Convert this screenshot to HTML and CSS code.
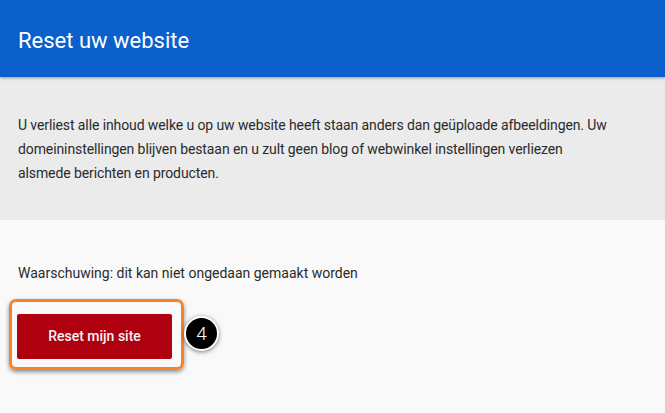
FILE: index.html
```html
<!DOCTYPE html>
<html lang="nl">
<head>
  <meta charset="UTF-8">
  <title>Reset uw website</title>
  <link rel="stylesheet" href="styles.css">
</head>
<body>
  <div class="header">
    <div class="title">Reset uw website</div>
  </div>
  <div class="info">
    <p>U verliest alle inhoud welke u op uw website heeft staan anders dan geüploade afbeeldingen. Uw domeininstellingen blijven bestaan en u zult geen blog of webwinkel instellingen verliezen alsmede berichten en producten.</p>
  </div>
  <div class="content">
    <p class="warning">Waarschuwing: dit kan niet ongedaan gemaakt worden</p>
    <div class="action">
      <div class="highlight">
        <a class="btn-reset" href="javascript:;">Reset mijn site</a>
      </div>
      <span class="step">4</span>
    </div>
  </div>
</body>
</html>
```
FILE: styles.css
```css
* {
  margin: 0;
  padding: 0;
  box-sizing: border-box;
}
html,
body {
  height: 100%;
  width: 100%;
  font-family: Roboto, "Liberation Sans", sans-serif;
  background: #f9f9f9;
}
.header {
  height: 77px;
  background: #0b60cb;
  box-shadow: 0 1px 3px rgba(0, 0, 0, 0.35);
  position: relative;
  z-index: 1;
  padding: 27px 18px 0;
}
.title {
  color: #ffffff;
  font-size: 22px;
  line-height: 28px;
}
.info {
  height: 143px;
  background: #ebebeb;
  padding: 36px 18px 0;
}
.info p {
  font-size: 14px;
  line-height: 24px;
  color: #2a2a2a;
  max-width: 600px;
  letter-spacing: -0.1px;
}
.content {
  padding: 43px 18px 0 9px;
}
.warning {
  font-size: 14px;
  line-height: 20px;
  color: #2a2a2a;
  padding-left: 9px;
}
.action {
  display: flex;
  align-items: center;
  gap: 0;
  margin-top: 16px;
}
.highlight {
  width: 175px;
  height: 71px;
  border: 3px solid #f5832a;
  border-radius: 7px;
  box-shadow: 0 2px 4px rgba(0, 0, 0, 0.45);
  padding: 12px 0 0 5px;
}
a {
  text-decoration: none;
}
.btn-reset {
  display: block;
  width: 155px;
  height: 45px;
  background: #ae000f;
  border-radius: 2px;
  color: #f3f3f3;
  font-size: 14px;
  font-weight: 500;
  line-height: 45px;
  text-align: center;
}
.step {
  width: 35px;
  height: 35px;
  border-radius: 50%;
  background: #000000;
  border: 2px solid #ffffff;
  box-shadow: 0 1px 4px rgba(0, 0, 0, 0.5);
  color: #ffffff;
  font-size: 19px;
  font-weight: 300;
  line-height: 31px;
  text-align: center;
  margin-top: -2px;
}
```
